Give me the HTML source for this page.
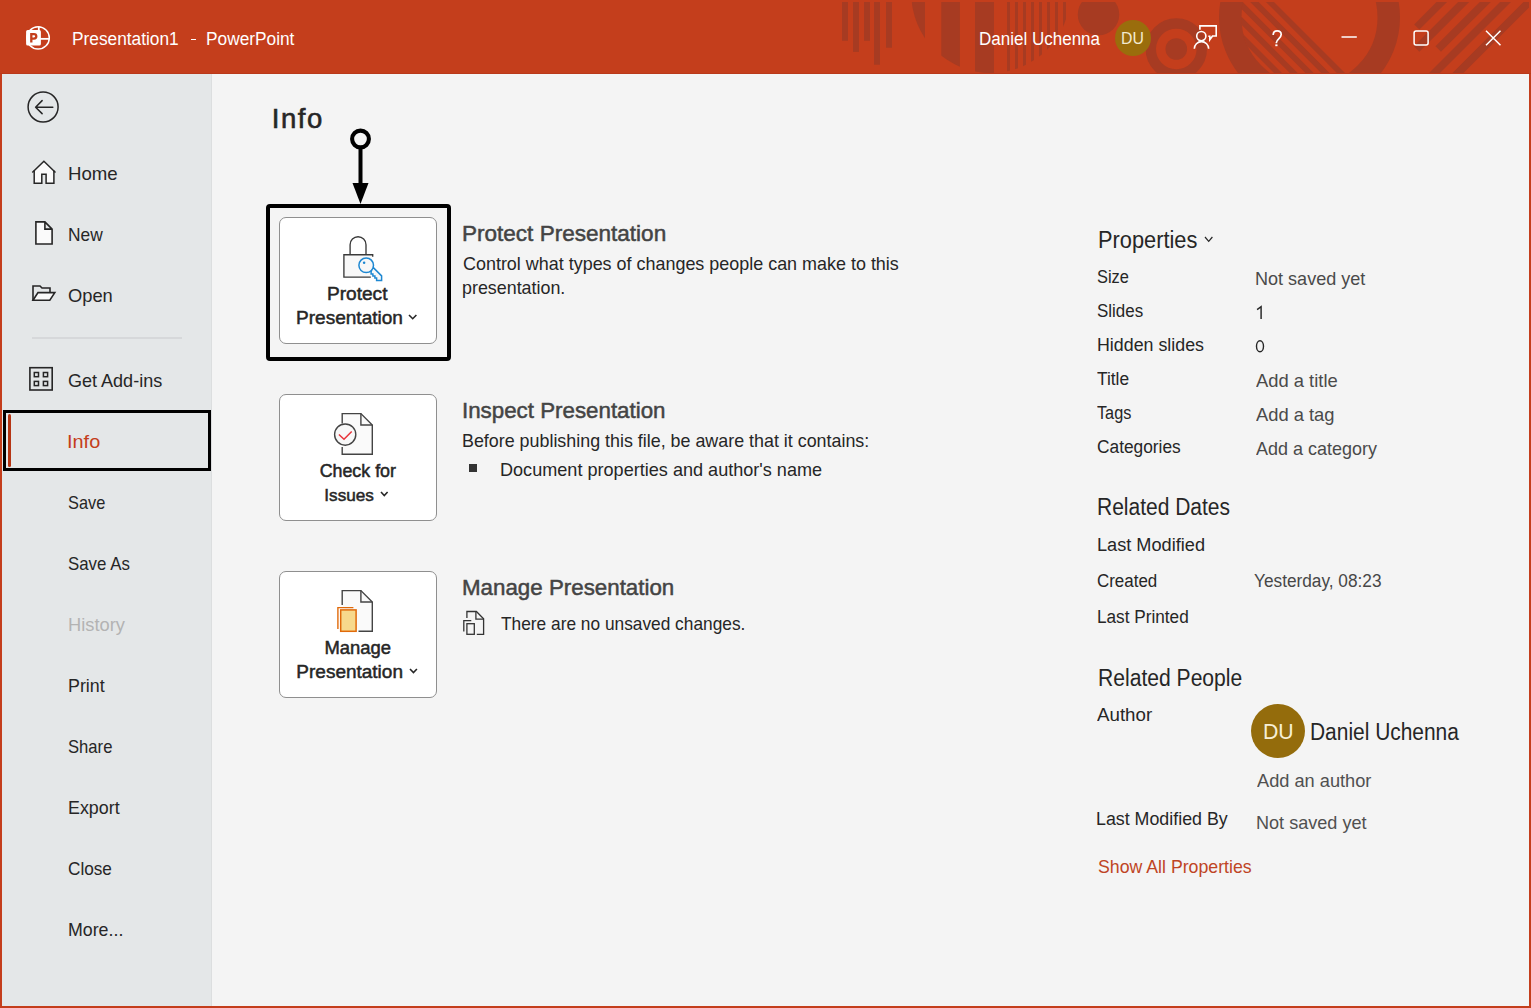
<!DOCTYPE html><html><head><meta charset="utf-8"><style>
*{margin:0;padding:0;box-sizing:border-box}
html,body{width:1531px;height:1008px;overflow:hidden}
body{background:#c43e1c;position:relative;font-family:"Liberation Sans",sans-serif}
.t{position:absolute;white-space:nowrap}
#tb{position:absolute;left:0;top:0;width:1531px;height:74px;background:#c43e1c}
#main{position:absolute;left:2px;top:74px;width:1527px;height:932px;background:#f4f4f4}
#sb{position:absolute;left:2px;top:74px;width:210px;height:932px;background:#e4e7e8;border-right:1px solid #dcdedf}
#selbox{position:absolute;left:3px;top:410px;width:208px;height:61px;border:3px solid #000}
#selbar{position:absolute;left:8px;top:414px;width:3px;height:53px;background:#b53513;border-radius:2px}
#hlbox{position:absolute;left:266px;top:204px;width:185px;height:157px;border:4px solid #000;border-radius:4px}
.btn{position:absolute;left:279px;width:158px;height:127px;background:#fff;border:1px solid #8f8f8f;border-radius:7px}
#av1{position:absolute;left:1115px;top:20px;width:36px;height:36px;border-radius:50%;background:#9a6d0c;color:#f5ecd0;font-size:15px;line-height:36px;text-align:center}
#av2{position:absolute;left:1251px;top:704px;width:54px;height:54px;border-radius:50%;background:#946c0c;color:#f7efd5;font-size:21px;line-height:54px;text-align:center}
</style></head><body><div id="main"></div><div id="tb"><svg width="1531" height="74" style="position:absolute;left:0;top:0">
<defs>
<clipPath id="cA"><rect x="0" y="2" width="1529" height="71"/></clipPath>
<clipPath id="cC"><circle cx="990.8" cy="-6.5" r="79.5"/></clipPath>
<clipPath id="cIn"><circle cx="1309.5" cy="17.5" r="68.5"/></clipPath>
</defs>
<g fill="#a73b22" clip-path="url(#cA)">
<rect x="842" y="0" width="6" height="40.8"/>
<rect x="853" y="0" width="6" height="51.9"/>
<rect x="864" y="0" width="6" height="40.8"/>
<rect x="874" y="0" width="6" height="64.7"/>
<rect x="886" y="0" width="6" height="47.7"/>
<g clip-path="url(#cC)">
<rect x="911.5" y="0" width="13.5" height="80"/>
<rect x="941.3" y="0" width="18.6" height="80"/>
<rect x="975" y="0" width="19" height="80"/>
<rect x="1007" y="0" width="3" height="80"/>
<rect x="1015" y="0" width="3" height="80"/>
<rect x="1023" y="0" width="3" height="80"/>
<rect x="1031" y="0" width="3" height="80"/>
<rect x="1039" y="0" width="3" height="80"/>
<rect x="1047" y="0" width="3" height="80"/>
<rect x="1055" y="0" width="3" height="80"/>
<rect x="1063" y="0" width="3" height="80"/>
</g>
<circle cx="1098.5" cy="14.5" r="20.75"/>
<circle cx="1176.3" cy="49" r="25.5" fill="none" stroke="#a73b22" stroke-width="10.4"/>
<circle cx="1176.3" cy="49" r="10.8"/>
<circle cx="1309.5" cy="17.5" r="79.25" fill="none" stroke="#a73b22" stroke-width="22.5"/>
<g clip-path="url(#cIn)">
<polygon points="1191,-10 1199,-10 1299,90 1291,90"/>
<polygon points="1206.8,-10 1214.7,-10 1314.7,90 1306.8,90"/>
<polygon points="1222.5,-10 1230.7,-10 1330.7,90 1322.5,90"/>
<polygon points="1238.2,-10 1246.6,-10 1346.6,90 1338.2,90"/>
<polygon points="1253.9,-10 1262,-10 1362,90 1353.9,90"/>
</g>
<polygon points="1443.5,-5 1454.1,-5 1419.4,29.6 1414.2,24.4"/>
<polygon points="1465.1,-5 1476.2,-5 1419.4,51.8 1413.9,46.2"/>
<polygon points="1486.8,-5 1497.8,-5 1441.0,51.8 1435.5,46.2"/>
<polygon points="1507,-5 1518,-5 1310.2,202.8 1304.8,197.2"/>
<polygon points="1530.5,-5 1541.5,-5 1333.8,202.8 1328.2,197.2"/>
</g>
<rect x="0" y="73" width="1531" height="1" fill="#b9391a"/><g>
<circle cx="38.1" cy="37.9" r="11.2" fill="none" stroke="#fff" stroke-width="1.5"/>
<line x1="38.8" y1="26.5" x2="38.8" y2="31" stroke="#fff" stroke-width="1.8"/>
<line x1="40" y1="38.85" x2="49" y2="38.85" stroke="#fff" stroke-width="1.8"/>
<rect x="26.1" y="30.1" width="14.8" height="15.4" rx="1.6" fill="#fff"/>
<path d="M31.3 42.6 V34.05 H34 A2.3 2.3 0 0 1 34 38.65 H31.3" fill="none" stroke="#c43e1c" stroke-width="2.3"/>
</g><g fill="none" stroke="#fff" stroke-width="1.6">
<path d="M1199.9 29.8 V25.9 H1216.2 V36 H1212.5 L1209.8 39.8 V36.2 H1208.3"/>
<circle cx="1201.3" cy="36.1" r="4.6"/>
<path d="M1194.3 48.8 A7.2 7.2 0 0 1 1208.7 48.8"/>
</g><g fill="none" stroke="#fff" stroke-width="1.7">
<path d="M1273.2 35.1 Q1273.2 30.9 1277.1 30.9 Q1281.2 30.9 1281.2 34.6 Q1281.2 36.6 1278.7 38.8 Q1276.4 40.8 1276.4 42.6 V43.2"/>
</g>
<rect x="1275.3" y="44.4" width="2.2" height="1.8" fill="#fff"/><g fill="none" stroke="#fff" stroke-width="1.5">
<line x1="1341.5" y1="37" x2="1356.8" y2="37"/>
<rect x="1414.1" y="30.9" width="14" height="14" rx="2"/>
<path d="M1486 30.7 L1500.5 45.2 M1500.5 30.7 L1486 45.2"/>
</g></svg><div class="t" style="left:71.92px;top:27px;font-size:18.80px;line-height:23px;color:#ffffff;font-weight:normal;transform:scaleX(0.9208);transform-origin:0 0;">Presentation1</div>
<div class="t" style="left:206.22px;top:27px;font-size:18.80px;line-height:23px;color:#ffffff;font-weight:normal;transform:scaleX(0.9206);transform-origin:0 0;">PowerPoint</div>
<div style="position:absolute;left:191.3px;top:39px;width:4.6px;height:1.4px;background:#fff"></div><div class="t" style="left:978.84px;top:27px;font-size:18.80px;line-height:23px;color:#ffffff;font-weight:normal;transform:scaleX(0.9055);transform-origin:0 0;">Daniel Uchenna</div>
<div id="av1"></div><div class="t" style="left:1121.28px;top:29px;font-size:15.60px;line-height:19px;color:#f3ead0;font-weight:normal;transform:scaleX(1.0149);transform-origin:0 0;">DU</div>
</div>
<div id="sb"><svg width="212" height="934" style="position:absolute;left:-2px;top:0">
<g fill="none" stroke="#262626" stroke-width="1.5" transform="translate(0,-74)">
<circle cx="43.1" cy="107" r="15"/>
<path d="M35.6 107.2 H52.8 M42.1 100.6 L35.6 107.2 L42.1 113.6" stroke-linecap="round" stroke-linejoin="round"/>
<path d="M34.2 170.6 L43.9 161.3 L53.9 170.6 V183.2 H46.1 V174.3 H41.8 V183.2 H34.2 Z" fill="#fafafa" stroke="none"/>
<path d="M32.3 172.5 L43.9 161.2 L55.5 172.5" stroke-width="1.5"/>
<path d="M34.2 170.6 V183.2 H41.8 V174.3 H46.1 V183.2 H53.9 V170.6" stroke-width="1.5"/>
<path d="M35.9 221.9 H44.9 L52.1 229.1 V244 H35.9 Z M44.9 221.9 V229.1 H52.1" fill="#fafafa" stroke-width="1.6"/>
<path d="M33 300.2 V286 H40 L42 288 H50 V292" stroke-width="1.6"/>
<path d="M33 300.2 L38 292.6 H54.8 L49.8 300.2 Z" fill="#fafafa" stroke-width="1.6"/>
<rect x="29.9" y="367.7" width="22.3" height="22.3" stroke-width="1.6"/>
<rect x="34.3" y="372.5" width="4.2" height="4.2" stroke-width="1.5"/>
<rect x="43.4" y="372.5" width="4.2" height="4.2" stroke-width="1.5"/>
<rect x="34.3" y="381.4" width="4.2" height="4.2" stroke-width="1.5"/>
<rect x="43.4" y="381.4" width="4.2" height="4.2" stroke-width="1.5"/>
</g>
<line x1="32" y1="264" x2="182" y2="264" stroke="#c8cacb" stroke-width="1.2"/>
</svg></div>
<div class="t" style="left:67.93px;top:162px;font-size:19.00px;line-height:23px;color:#262626;font-weight:normal;transform:scaleX(0.9814);transform-origin:0 0;">Home</div>
<div class="t" style="left:68.03px;top:223px;font-size:19.00px;line-height:23px;color:#262626;font-weight:normal;transform:scaleX(0.9126);transform-origin:0 0;">New</div>
<div class="t" style="left:67.73px;top:284px;font-size:19.00px;line-height:23px;color:#262626;font-weight:normal;transform:scaleX(0.9639);transform-origin:0 0;">Open</div>
<div class="t" style="left:68.15px;top:369px;font-size:19.00px;line-height:23px;color:#262626;font-weight:normal;transform:scaleX(0.9488);transform-origin:0 0;">Get Add-ins</div>
<div class="t" style="left:66.92px;top:430px;font-size:19.00px;line-height:23px;color:#c43e1c;font-weight:normal;transform:scaleX(1.0479);transform-origin:0 0;">Info</div>
<div class="t" style="left:68.23px;top:491px;font-size:19.00px;line-height:23px;color:#262626;font-weight:normal;transform:scaleX(0.8602);transform-origin:0 0;">Save</div>
<div class="t" style="left:68.20px;top:552px;font-size:19.00px;line-height:23px;color:#262626;font-weight:normal;transform:scaleX(0.8869);transform-origin:0 0;">Save As</div>
<div class="t" style="left:67.56px;top:613px;font-size:19.00px;line-height:23px;color:#b3b3b3;font-weight:normal;transform:scaleX(0.9618);transform-origin:0 0;">History</div>
<div class="t" style="left:67.59px;top:674px;font-size:19.00px;line-height:23px;color:#262626;font-weight:normal;transform:scaleX(0.9385);transform-origin:0 0;">Print</div>
<div class="t" style="left:68.21px;top:735px;font-size:19.00px;line-height:23px;color:#262626;font-weight:normal;transform:scaleX(0.8753);transform-origin:0 0;">Share</div>
<div class="t" style="left:67.59px;top:796px;font-size:19.00px;line-height:23px;color:#262626;font-weight:normal;transform:scaleX(0.9398);transform-origin:0 0;">Export</div>
<div class="t" style="left:68.10px;top:857px;font-size:19.00px;line-height:23px;color:#262626;font-weight:normal;transform:scaleX(0.9036);transform-origin:0 0;">Close</div>
<div class="t" style="left:67.60px;top:918px;font-size:19.00px;line-height:23px;color:#262626;font-weight:normal;transform:scaleX(0.9356);transform-origin:0 0;">More...</div>
<div id="selbox"></div><div id="selbar"></div>
<div class="t" style="left:271.70px;top:102px;font-size:27.50px;line-height:33px;color:#262626;font-weight:normal;-webkit-text-stroke:0.6px #262626;letter-spacing:1.600px;">Info</div>
<svg width="40" height="90" style="position:absolute;left:340px;top:120px">
<circle cx="20.5" cy="19" r="8.4" fill="none" stroke="#000" stroke-width="4.1"/>
<line x1="20.5" y1="27" x2="20.5" y2="66" stroke="#000" stroke-width="4"/>
<path d="M12.5 63 L28.5 63 L20.5 84 Z" fill="#000"/>
</svg><div id="hlbox"></div>
<div class="btn" style="top:217px"></div>
<div class="btn" style="top:394px"></div>
<div class="btn" style="top:571px"></div>
<svg width="60" height="60" style="position:absolute;left:330px;top:230px">
<g transform="translate(-330,-230)">
<path d="M350.1 254.7 V244.7 A7.95 7.95 0 0 1 366 244.7 V254.7" fill="none" stroke="#3a3a3a" stroke-width="1.35"/>
<rect x="343.9" y="254.7" width="28" height="22.4" fill="#f8f8f8"/>
<path d="M372.7 256.8 V254.7 H343.9 V277.1 H370.8" fill="none" stroke="#3a3a3a" stroke-width="1.35"/>
<g fill="#f8f8f8" stroke="#1e88d2" stroke-width="1.5" stroke-linejoin="miter">
<path d="M372.6 266.9 L381.6 275.9 V280.4 H376.6 V278.1 H374.9 V276.1 H372.9 V273.9 H371.1 V271.7 Z"/>
<circle cx="366.2" cy="265.3" r="7.3"/>
</g>
<circle cx="364.1" cy="262.8" r="1.25" fill="#1e88d2"/>
</g></svg><svg width="60" height="60" style="position:absolute;left:330px;top:405px">
<g transform="translate(-330,-405)">
<path d="M342.2 423.4 V413.6 H360.9 L372.3 425 V454.3 H342.2 V447" fill="#fafafa" stroke="#444" stroke-width="1.4"/>
<path d="M360.9 413.6 V425 H372.3" fill="none" stroke="#444" stroke-width="1.4"/>
<circle cx="345.2" cy="434.6" r="10.6" fill="#f8f8f8" stroke="#444" stroke-width="1.4"/>
<path d="M338.9 434.5 L344 439.3 L351.7 431.4" fill="none" stroke="#e8333a" stroke-width="1.5"/>
</g></svg><svg width="60" height="60" style="position:absolute;left:330px;top:582px">
<g transform="translate(-330,-582)">
<path d="M342.2 605 V590.6 H360.9 L372.3 602 V631.3 H358.5" fill="#fafafa" stroke="#444" stroke-width="1.4"/>
<path d="M360.9 590.6 V602 H372.3" fill="none" stroke="#444" stroke-width="1.4"/>
<path d="M337.9 628.9 V607.6 H353.4" fill="none" stroke="#e06a0a" stroke-width="1.4"/>
<rect x="340.7" y="609.9" width="15.4" height="21.4" fill="#f7d98c" stroke="#e06a0a" stroke-width="1.5"/>
</g></svg><div class="t" style="left:326.90px;top:282px;font-size:19.14px;line-height:23px;color:#262626;font-weight:normal;-webkit-text-stroke:0.5px #262626;">Protect</div>
<div class="t" style="left:296.00px;top:306px;font-size:19.06px;line-height:23px;color:#262626;font-weight:normal;-webkit-text-stroke:0.5px #262626;">Presentation</div>
<svg width="11.4" height="7.7" style="position:absolute;left:407.3px;top:312.7px"><path d="M2 2 L5.7 5.7 L9.4 2" fill="none" stroke="#262626" stroke-width="1.6"/></svg>
<div class="t" style="left:319.65px;top:461px;font-size:17.83px;line-height:21px;color:#262626;font-weight:normal;-webkit-text-stroke:0.5px #262626;">Check for</div>
<div class="t" style="left:324.30px;top:485px;font-size:17.17px;line-height:21px;color:#262626;font-weight:normal;-webkit-text-stroke:0.5px #262626;">Issues</div>
<svg width="10.6" height="7.5" style="position:absolute;left:378.9px;top:489.7px"><path d="M2 2 L5.3 5.5 L8.6 2" fill="none" stroke="#262626" stroke-width="1.6"/></svg>
<div class="t" style="left:324.45px;top:637px;font-size:18.43px;line-height:22px;color:#262626;font-weight:normal;-webkit-text-stroke:0.5px #262626;">Manage</div>
<div class="t" style="left:296.35px;top:660px;font-size:18.99px;line-height:23px;color:#262626;font-weight:normal;-webkit-text-stroke:0.5px #262626;">Presentation</div>
<svg width="10.9" height="7.5" style="position:absolute;left:407.5px;top:667.2px"><path d="M2 2 L5.45 5.5 L8.9 2" fill="none" stroke="#262626" stroke-width="1.6"/></svg>
<div class="t" style="left:461.83px;top:220px;font-size:22.30px;line-height:27px;color:#444444;font-weight:normal;-webkit-text-stroke:0.5px #444444;transform:scaleX(1.0106);transform-origin:0 0;">Protect Presentation</div>
<div class="t" style="left:462.51px;top:253px;font-size:18.20px;line-height:22px;color:#262626;font-weight:normal;transform:scaleX(0.9864);transform-origin:0 0;">Control what types of changes people can make to this</div>
<div class="t" style="left:462.22px;top:277px;font-size:18.20px;line-height:22px;color:#262626;font-weight:normal;transform:scaleX(0.9824);transform-origin:0 0;">presentation.</div>
<div class="t" style="left:461.65px;top:397px;font-size:22.30px;line-height:27px;color:#444444;font-weight:normal;-webkit-text-stroke:0.5px #444444;transform:scaleX(1.0010);transform-origin:0 0;">Inspect Presentation</div>
<div class="t" style="left:462.03px;top:430px;font-size:18.20px;line-height:22px;color:#262626;font-weight:normal;transform:scaleX(0.9825);transform-origin:0 0;">Before publishing this file, be aware that it contains:</div>
<div style="position:absolute;left:469.2px;top:464.2px;width:7.7px;height:7.6px;background:#333"></div>
<div class="t" style="left:500.26px;top:459px;font-size:18.20px;line-height:22px;color:#262626;font-weight:normal;transform:scaleX(0.9943);transform-origin:0 0;">Document properties and author&#39;s name</div>
<div class="t" style="left:461.85px;top:574px;font-size:22.30px;line-height:27px;color:#444444;font-weight:normal;-webkit-text-stroke:0.5px #444444;transform:scaleX(1.0014);transform-origin:0 0;">Manage Presentation</div>
<svg width="30" height="30" style="position:absolute;left:458px;top:608px">
<g transform="translate(-458,-608)" fill="none" stroke="#333" stroke-width="1.3">
<path d="M466.9 617.9 V611.5 H476.4 L483.6 618.7 V634.3 H476.8"/>
<path d="M475.9 611.5 V619.2 H483.6"/>
<path d="M463.8 631.4 V620.7 H471.3"/>
<rect x="466.9" y="623.7" width="7.4" height="10.6"/>
</g></svg><div class="t" style="left:500.62px;top:613px;font-size:18.20px;line-height:22px;color:#262626;font-weight:normal;transform:scaleX(0.9514);transform-origin:0 0;">There are no unsaved changes.</div>
<div class="t" style="left:1098.00px;top:226px;font-size:23.00px;line-height:28px;color:#262626;font-weight:normal;transform:scaleX(0.9471);transform-origin:0 0;">Properties</div>
<svg width="11.4" height="8.4" style="position:absolute;left:1202.6px;top:235.3px"><path d="M2 2 L5.7 6.4 L9.4 2" fill="none" stroke="#262626" stroke-width="1.2"/></svg>
<div class="t" style="left:1096.91px;top:265px;font-size:18.80px;line-height:23px;color:#262626;font-weight:normal;transform:scaleX(0.8736);transform-origin:0 0;">Size</div>
<div class="t" style="left:1254.74px;top:268px;font-size:18.60px;line-height:22px;color:#4a4a4a;font-weight:normal;transform:scaleX(0.9706);transform-origin:0 0;">Not saved yet</div>
<div class="t" style="left:1096.89px;top:299px;font-size:18.80px;line-height:23px;color:#262626;font-weight:normal;transform:scaleX(0.9012);transform-origin:0 0;">Slides</div>
<svg width="20" height="20" style="position:absolute;left:1250px;top:302px"><path d="M7.1 7.6 L11.1 4.6 V16.9" fill="none" stroke="#262626" stroke-width="1.45"/></svg>
<div class="t" style="left:1096.78px;top:333px;font-size:18.80px;line-height:23px;color:#262626;font-weight:normal;transform:scaleX(0.9485);transform-origin:0 0;">Hidden slides</div>
<svg width="20" height="20" style="position:absolute;left:1250px;top:336px"><ellipse cx="10" cy="10.25" rx="3.5" ry="5.55" fill="none" stroke="#262626" stroke-width="1.4"/></svg>
<div class="t" style="left:1097.43px;top:367px;font-size:18.80px;line-height:23px;color:#262626;font-weight:normal;transform:scaleX(0.9226);transform-origin:0 0;">Title</div>
<div class="t" style="left:1255.60px;top:370px;font-size:18.60px;line-height:22px;color:#4a4a4a;font-weight:normal;transform:scaleX(0.9878);transform-origin:0 0;">Add a title</div>
<div class="t" style="left:1097.45px;top:401px;font-size:18.80px;line-height:23px;color:#262626;font-weight:normal;transform:scaleX(0.8653);transform-origin:0 0;">Tags</div>
<div class="t" style="left:1255.60px;top:404px;font-size:18.60px;line-height:22px;color:#4a4a4a;font-weight:normal;transform:scaleX(0.9860);transform-origin:0 0;">Add a tag</div>
<div class="t" style="left:1096.97px;top:435px;font-size:18.80px;line-height:23px;color:#262626;font-weight:normal;transform:scaleX(0.9216);transform-origin:0 0;">Categories</div>
<div class="t" style="left:1255.60px;top:438px;font-size:18.60px;line-height:22px;color:#4a4a4a;font-weight:normal;transform:scaleX(0.9664);transform-origin:0 0;">Add a category</div>
<div class="t" style="left:1097.37px;top:493px;font-size:23.00px;line-height:28px;color:#262626;font-weight:normal;transform:scaleX(0.9126);transform-origin:0 0;">Related Dates</div>
<div class="t" style="left:1096.85px;top:533px;font-size:18.80px;line-height:23px;color:#262626;font-weight:normal;transform:scaleX(0.9670);transform-origin:0 0;">Last Modified</div>
<div class="t" style="left:1097.29px;top:569px;font-size:18.80px;line-height:23px;color:#262626;font-weight:normal;transform:scaleX(0.9011);transform-origin:0 0;">Created</div>
<div class="t" style="left:1253.93px;top:569px;font-size:18.80px;line-height:23px;color:#474747;font-weight:normal;transform:scaleX(0.9180);transform-origin:0 0;">Yesterday, 08:23</div>
<div class="t" style="left:1096.93px;top:605px;font-size:18.80px;line-height:23px;color:#262626;font-weight:normal;transform:scaleX(0.9150);transform-origin:0 0;">Last Printed</div>
<div class="t" style="left:1097.66px;top:664px;font-size:23.00px;line-height:28px;color:#262626;font-weight:normal;transform:scaleX(0.9171);transform-origin:0 0;">Related People</div>
<div class="t" style="left:1097.30px;top:703px;font-size:18.80px;line-height:23px;color:#262626;font-weight:normal;transform:scaleX(0.9964);transform-origin:0 0;">Author</div>
<div id="av2"></div>
<div class="t" style="left:1262.62px;top:719px;font-size:21.50px;line-height:26px;color:#f7efd5;font-weight:normal;transform:scaleX(0.9891);transform-origin:0 0;">DU</div>
<div class="t" style="left:1310.07px;top:718px;font-size:23.00px;line-height:28px;color:#262626;font-weight:normal;transform:scaleX(0.9098);transform-origin:0 0;">Daniel Uchenna</div>
<div class="t" style="left:1256.50px;top:770px;font-size:18.70px;line-height:22px;color:#505050;font-weight:normal;transform:scaleX(0.9744);transform-origin:0 0;">Add an author</div>
<div class="t" style="left:1096.38px;top:807px;font-size:18.80px;line-height:23px;color:#262626;font-weight:normal;transform:scaleX(0.9484);transform-origin:0 0;">Last Modified By</div>
<div class="t" style="left:1255.54px;top:812px;font-size:18.60px;line-height:22px;color:#505050;font-weight:normal;transform:scaleX(0.9723);transform-origin:0 0;">Not saved yet</div>
<div class="t" style="left:1097.94px;top:856px;font-size:18.60px;line-height:22px;color:#bf4424;font-weight:normal;transform:scaleX(0.9530);transform-origin:0 0;">Show All Properties</div>
</body></html>
